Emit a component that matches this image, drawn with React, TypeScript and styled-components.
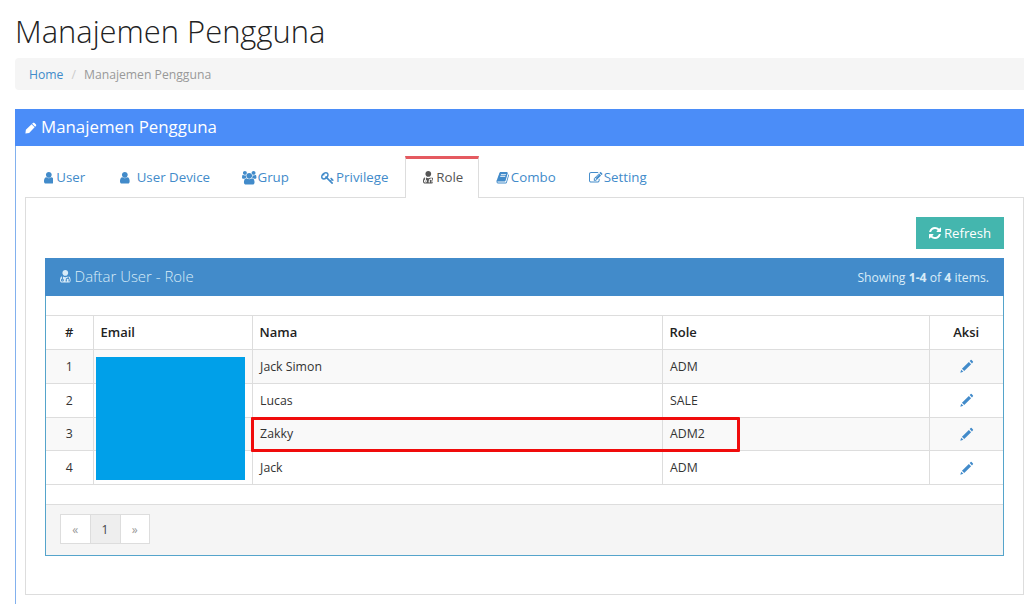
import React from "react";
import styled, { createGlobalStyle } from "styled-components";

const GlobalStyle = createGlobalStyle`
  *, *::before, *::after { box-sizing: border-box; }
  html, body { margin: 0; padding: 0; background: #fff; overflow: hidden; }
  body { font-family: "Open Sans", sans-serif; font-size: 13px; color: #333; line-height: 20px; }
`;

const icons = {
  user: { w: 1280, d: "M1280 1399q0 109-62.5 187t-150.5 78h-854q-88 0-150.5-78t-62.5-187q0-85 8.5-160.5t31.5-152 58.5-131 94-89 134.5-34.5q131 128 313 128t313-128q76 0 134.5 34.5t94 89 58.5 131 31.5 152 8.5 160.5zm-256-887q0 159-112.5 271.5t-271.5 112.5-271.5-112.5-112.5-271.5 112.5-271.5 271.5-112.5 271.5 112.5 112.5 271.5z" },
  users: { w: 1920, d: "M593 896q-162 5-265 128h-134q-82 0-138-40.5t-56-118.5q0-353 124-353 6 0 43.5 21t97.5 42.5 119 21.5q67 0 133-23-5 37-5 66 0 139 81 256zm1071 637q0 120-73 189.5t-194 69.5h-874q-121 0-194-69.5t-73-189.5q0-53 3.5-103.5t14-109 26.5-108.5 43-97.5 62-81 85.5-53.5 111.5-20q10 0 43 21.5t73 48 107 48 135 21.5 135-21.5 107-48 73-48 43-21.5q61 0 111.5 20t85.5 53.5 62 81 43 97.5 26.5 108.5 14 109 3.5 103.5zm-1024-1277q0 106-75 181t-181 75-181-75-75-181 75-181 181-75 181 75 75 181zm704 384q0 159-112.5 271.5t-271.5 112.5-271.5-112.5-112.5-271.5 112.5-271.5 271.5-112.5 271.5 112.5 112.5 271.5zm576 225q0 78-56 118.5t-138 40.5h-134q-103-123-265-128 81-117 81-256 0-29-5-66 66 23 133 23 59 0 119-21.5t97.5-42.5 43.5-21q124 0 124 353zm-128-609q0 106-75 181t-181 75-181-75-75-181 75-181 181-75 181 75 75 181z" },
  key: { w: 1792, d: "M832 512q0-80-56-136t-136-56-136 56-56 136q0 42 19 83-41-19-83-19-80 0-136 56t-56 136 56 136 136 56 136-56 56-136q0-42-19-83 41 19 83 19 80 0 136-56t56-136zm851 704q0 17-49 66t-66 49q-9 0-28.5-16t-36.5-33-38.5-40-24.5-26l-96 96 220 220q28 28 28 68 0 42-39 81t-81 39q-40 0-68-28l-671-671q-176 131-365 131-163 0-265.5-102.5t-102.5-265.5q0-160 95-313t248-248 313-95q163 0 265.5 102.5t102.5 265.5q0 189-131 365l355 355 96-96q-3-3-26-24.5t-40-38.5-33-36.5-16-28.5q0-17 49-66t66-49q13 0 23 10 6 6 46 44.5t82 79.5 86.5 86 73 78 28.5 41z" },
  doctor: { w: 1408, x: 192, d: "M576 1344q0 26-19 45t-45 19-45-19-19-45 19-45 45-19 45 19 19 45zm1024 64q0 121-73 192t-194 71h-874q-121 0-194-71t-73-192q0-68 5.5-131t24-138 47.5-132.5 81-103 120-60.5q-22 52-22 120v203q-58 20-93 70t-35 111q0 80 56 136t136 56 136-56 56-136q0-61-35.5-111t-92.5-70v-203q0-62 25-93 132 104 295 104t295-104q25 31 25 93v64q-106 0-181 75t-75 181v89q-32 29-32 71 0 40 28 68t68 28 68-28 28-68q0-42-32-71v-89q0-52 38-90t90-38 90 38 38 90v89q-32 29-32 71 0 40 28 68t68 28 68-28 28-68q0-42-32-71v-89q0-68-34.5-127.5t-93.5-93.5q0-10 .5-42.5t0-48-2.5-41.5-7-47-13-40q68 15 120 60.5t81 103 47.5 132.5 24 138 5.5 131zm-320-1024q0 159-112.5 271.5t-271.5 112.5-271.5-112.5-112.5-271.5 112.5-271.5 271.5-112.5 271.5 112.5 112.5 271.5z" },
  book: { w: 1792, d: "M1703 478q40 57 18 129l-275 906q-19 64-76.5 107.5t-122.5 43.5h-923q-77 0-148.5-53.5t-99.5-131.5q-24-67-2-127 0-4 3-27t4-37q1-8-3-21.5t-3-19.5q2-11 8-21t16.5-23.5 16.5-23.5q23-38 45-91.5t30-91.5q3-10 .5-30t-.5-28q3-11 17-28t17-23q21-36 42-92t25-90q1-9-2.5-32t.5-28q4-13 22-30.5t22-22.5q19-26 42.5-84.5t27.5-96.5q1-8-3-25.5t-2-26.5q2-8 9-18t18-23 17-21q8-12 16.5-30.5t15-35 16-36 19.5-32 26.5-23.5 36-11.5 47.5 5.5l-1 3q38-9 51-9h761q74 0 114 56t18 130l-274 906q-36 119-71.5 153.5t-128.5 34.5h-869q-27 0-38 15-11 16-1 43 24 70 144 70h923q29 0 56-15.5t35-41.5l300-987q7-22 5-57 38 15 59 43zm-1064 2q-4 13 2 22.5t20 9.5h608q13 0 25.5-9.5t16.5-22.5l21-64q4-13-2-22.5t-20-9.5h-608q-13 0-25.5 9.5t-16.5 22.5zm-83 256q-4 13 2 22.5t20 9.5h608q13 0 25.5-9.5t16.5-22.5l21-64q4-13-2-22.5t-20-9.5h-608q-13 0-25.5 9.5t-16.5 22.5z" },
  edit: { w: 1792, d: "M888 1184l116-116-152-152-116 116v56h96v96h56zm440-720q-16-16-33 1l-350 350q-17 17-1 33t33-1l350-350q17-17 1-33zm80 594v190q0 119-84.5 203.5t-203.5 84.5h-832q-119 0-203.5-84.5t-84.5-203.5v-832q0-119 84.5-203.5t203.5-84.5h832q63 0 117 25 15 7 18 23 3 17-9 29l-49 49q-14 14-32 8-23-6-45-6h-832q-66 0-113 47t-47 113v832q0 66 47 113t113 47h832q66 0 113-47t47-113v-126q0-13 9-22l64-64q15-15 35-7t20 29zm-96-738l288 288-672 672h-288v-288zm444 132l-92 92-288-288 92-92q28-28 68-28t68 28l152 152q28 28 28 68t-28 68z" },
  refresh: { w: 1536, x: 128, d: "M1639 1056q0 5-1 7-64 268-268 434.5t-478 166.5q-146 0-282.5-55t-243.5-157l-129 129q-19 19-45 19t-45-19-19-45v-448q0-26 19-45t45-19h448q26 0 45 19t19 45-19 45l-137 137q71 66 161 102t187 36q134 0 250-65t186-179q11-17 53-117 8-23 30-23h192q13 0 22.5 9.5t9.5 22.5zm25-800v448q0 26-19 45t-45 19h-448q-26 0-45-19t-19-45 19-45l138-138q-148-137-349-137-134 0-250 65t-186 179q-11 17-53 117-8 23-30 23h-199q-13 0-22.5-9.5t-9.5-22.5v-7q65-268 270-434.5t480-166.5q146 0 284 55.5t245 156.5l130-129q19-19 45-19t45 19 19 45z" },
  pen: { w: 1792, d: "M60 1720L130 1150L980 330L1440 790L620 1630ZM1060 260L1210 130Q1320 60 1420 150L1640 370Q1720 480 1640 590L1510 720Z" },
  pencil: { w: 1792, d: "M40 1752L150 1370L430 1640ZM250 1260L1130 380L1420 670L540 1550ZM1240 270L1370 140Q1430 80 1490 140L1660 310Q1720 370 1660 430L1530 560Z" },
};
type IconName = keyof typeof icons;

const Svg = styled.svg`
  flex: none;
  fill: currentColor;
  display: block;
`;

function Icon({ name, size = 14 }: { name: IconName; size?: number }) {
  const icon: { w: number; x?: number; d: string } = icons[name];
  return (
    <Svg width={(icon.w / 1792) * size} height={size} viewBox={`${icon.x ?? 0} 0 ${icon.w} 1792`} aria-hidden>
      <path d={icon.d} />
    </Svg>
  );
}

const Page = styled.main`
  width: 1024px;
  height: 604px;
  padding: 13px 0 0 15px;
  overflow: hidden;
`;
const Title = styled.h1`
  margin: 0;
  height: 45px;
  font-size: 30.9px;
  font-weight: 300;
  line-height: 36px;
  color: #222;
`;
const Breadcrumb = styled.nav`
  display: flex;
  height: 32px;
  padding-left: 14px;
  background: #f5f5f5;
  border-radius: 4px 0 0 4px;
  font-size: 12.2px;
  line-height: 33px;
  color: #999;
`;
const Crumb = styled.a`
  color: #428bca;
`;
const Slash = styled.span`
  padding: 0 8px;
  color: #ccc;
`;
const Portlet = styled.section`
  margin-top: 19px;
  height: 520px;
  border-left: 1px solid #82b1ee;
`;
const PortletHead = styled.header`
  display: flex;
  align-items: center;
  gap: 4px;
  height: 37px;
  margin-left: -1px;
  padding-left: 10px;
  background: #4b8df8;
  color: #fff;
  h2 { margin: 0; padding-bottom: 2px; font-size: 16.85px; font-weight: 400; line-height: 34px; }
`;
const Tabs = styled.nav`
  display: flex;
  height: 52px;
  padding: 10px 0 0 10px;
`;
const Tab = styled.a<{ $active?: boolean; $width: number; $gap?: number }>`
  display: flex;
  justify-content: center;
  align-items: center;
  gap: ${(p) => p.$gap ?? 3}px;
  width: ${(p) => p.$width}px;
  height: ${(p) => (p.$active ? 42 : 41)}px;
  padding-top: ${(p) => (p.$active ? 0 : 3)}px;
  padding-bottom: ${(p) => (p.$active ? 1 : 0)}px;
  padding-left: ${(p) => (p.$active ? 2 : 0)}px;
  color: ${(p) => (p.$active ? "#555" : "#428bca")};
  font-size: 13.3px;
  background: #fff;
  border: ${(p) => (p.$active ? "1px solid #ddd" : "0")};
  border-top: ${(p) => (p.$active ? "3px solid #e55a60" : "0")};
  border-bottom: 0;
  position: relative;
  z-index: 1;
`;
const TabLabel = styled.span`
  padding-bottom: 2px;
`;
const TabPane = styled.div`
  margin: -1px 0 0 9px;
  height: 398px;
  padding: 19px 19px 0;
  border: 1px solid #ddd;
`;
const Actions = styled.div`
  display: flex;
  justify-content: flex-end;
  height: 41px;
`;
const RefreshButton = styled.button`
  display: flex;
  align-items: center;
  justify-content: center;
  gap: 3px;
  width: 88px;
  height: 32px;
  padding: 0 0 1px;
  border: 0;
  background: #44b6ae;
  color: #fff;
  font: 13.2px "Open Sans", sans-serif;
`;
const Panel = styled.section`
  height: 298px;
  border: 1px solid #55a4cb;
`;
const PanelHead = styled.header`
  display: flex;
  align-items: center;
  gap: 4px;
  height: 38px;
  margin: -1px -1px 0;
  padding: 0 15px;
  background: #428bca;
  color: #d8ebf8;
  h3 { margin: 0; padding-bottom: 3px; font-size: 14.95px; font-weight: 300; line-height: 32px; }
`;
const Summary = styled.span`
  margin-left: auto;
  padding-top: 1px;
  font-size: 12.2px;
  b { font-weight: 700; }
`;
const TableWrap = styled.div`
  position: relative;
  height: 208px;
  padding-top: 19px;
`;
const Table = styled.table`
  width: 100%;
  border-collapse: collapse;
  table-layout: fixed;
`;
const Row = styled.tr<{ $shaded?: boolean }>`
  height: ${(p) => (p.$shaded === undefined ? 34 : 33.8)}px;
  background: ${(p) => (p.$shaded ? "#f9f9f9" : "#fff")};
`;
const Cell = styled.td<{ $center?: boolean }>`
  padding: 1px 7px 0 ${(p) => (p.$center ? 7 : 7.6)}px;
  border: 1px solid #ddd;
  text-align: ${(p) => (p.$center ? "center" : "left")};
  font-size: 12.3px;
  line-height: 18px;
  vertical-align: middle;
  &:first-child { border-left: 0; }
  &:last-child { border-right: 0; }
`;
const HeadCell = styled(Cell)`
  padding: 0 7px 1px;
  font-size: 13px;
  font-weight: 600;
  color: #222;
`;
const EditLink = styled.a`
  display: flex;
  justify-content: center;
  padding: 0 0 1px 1px;
  color: #428bca;
`;
const Redaction = styled.div`
  position: absolute;
  left: 49.5px;
  top: 61px;
  width: 149.5px;
  height: 123px;
  background: #00a0e9;
`;
const Highlight = styled.div`
  position: absolute;
  left: 205px;
  top: 121px;
  width: 488.5px;
  height: 35px;
  border: 3px solid #f00c0c;
  border-radius: 1px;
`;
const PanelFoot = styled.footer`
  height: 51px;
  padding: 10px 14px;
  border-top: 1px solid #ddd;
  background: #f5f5f5;
`;
const Pager = styled.div`
  display: flex;
  width: max-content;
  height: 30px;
  margin-top: -1px;
  border: 1px solid #ddd;
`;
const PageItem = styled.span<{ $active?: boolean }>`
  width: ${(p) => (p.$active ? 31 : 28.5)}px;
  text-align: center;
  line-height: 29px;
  font-size: 12px;
  color: ${(p) => (p.$active ? "#444" : "#999")};
  background: ${(p) => (p.$active ? "#eee" : "#fff")};
  border: solid #ddd;
  border-width: 0 ${(p) => (p.$active ? "1px" : "0")};
`;

const tabs: { label: string; icon: IconName; width: number; gap?: number; active?: boolean }[] = [
  { label: "User", icon: "user", width: 77 },
  { label: "User Device", icon: "user", width: 124, gap: 7 },
  { label: "Grup", icon: "users", width: 77, gap: 1 },
  { label: "Privilege", icon: "key", width: 101, gap: 2 },
  { label: "Role", icon: "doctor", width: 74, active: true },
  { label: "Combo", icon: "book", width: 94, gap: 1 },
  { label: "Setting", icon: "edit", width: 90, gap: 1 },
];
const rows = [
  ["Jack Simon", "ADM"],
  ["Lucas", "SALE"],
  ["Zakky", "ADM2"],
  ["Jack", "ADM"],
];

export default function App() {
  return (
    <>
      <GlobalStyle />
      <Page>
        <Title>Manajemen Pengguna</Title>
        <Breadcrumb>
          <Crumb>Home</Crumb>
          <Slash>/</Slash>
          <span>Manajemen Pengguna</span>
        </Breadcrumb>
        <Portlet>
          <PortletHead>
            <Icon name="pen" size={12} />
            <h2>Manajemen Pengguna</h2>
          </PortletHead>
          <Tabs>
            {tabs.map((t) => (
              <Tab key={t.label} $width={t.width} $gap={t.gap} $active={t.active}>
                <Icon name={t.icon} size={13.5} />
                <TabLabel>{t.label}</TabLabel>
              </Tab>
            ))}
          </Tabs>
          <TabPane>
            <Actions>
              <RefreshButton><Icon name="refresh" />Refresh</RefreshButton>
            </Actions>
            <Panel>
              <PanelHead>
                <Icon name="doctor" size={13.5} />
                <h3>Daftar User - Role</h3>
                <Summary>Showing <b>1-4</b> of <b>4</b> items.</Summary>
              </PanelHead>
              <TableWrap>
                <Table>
                  <colgroup>
                    <col width="47" /><col width="159" /><col width="410" /><col width="267" /><col />
                  </colgroup>
                  <thead>
                    <Row>
                      <HeadCell as="th" $center>#</HeadCell>
                      <HeadCell as="th">Email</HeadCell>
                      <HeadCell as="th">Nama</HeadCell>
                      <HeadCell as="th">Role</HeadCell>
                      <HeadCell as="th" $center>Aksi</HeadCell>
                    </Row>
                  </thead>
                  <tbody>
                    {rows.map(([name, role], i) => (
                      <Row key={name} $shaded={i % 2 === 0}>
                        <Cell $center>{i + 1}</Cell>
                        <Cell />
                        <Cell>{name}</Cell>
                        <Cell>{role}</Cell>
                        <Cell $center><EditLink><Icon name="pencil" /></EditLink></Cell>
                      </Row>
                    ))}
                  </tbody>
                </Table>
                <Redaction />
                <Highlight />
              </TableWrap>
              <PanelFoot>
                <Pager>
                  <PageItem>«</PageItem>
                  <PageItem $active>1</PageItem>
                  <PageItem>»</PageItem>
                </Pager>
              </PanelFoot>
            </Panel>
          </TabPane>
        </Portlet>
      </Page>
    </>
  );
}
